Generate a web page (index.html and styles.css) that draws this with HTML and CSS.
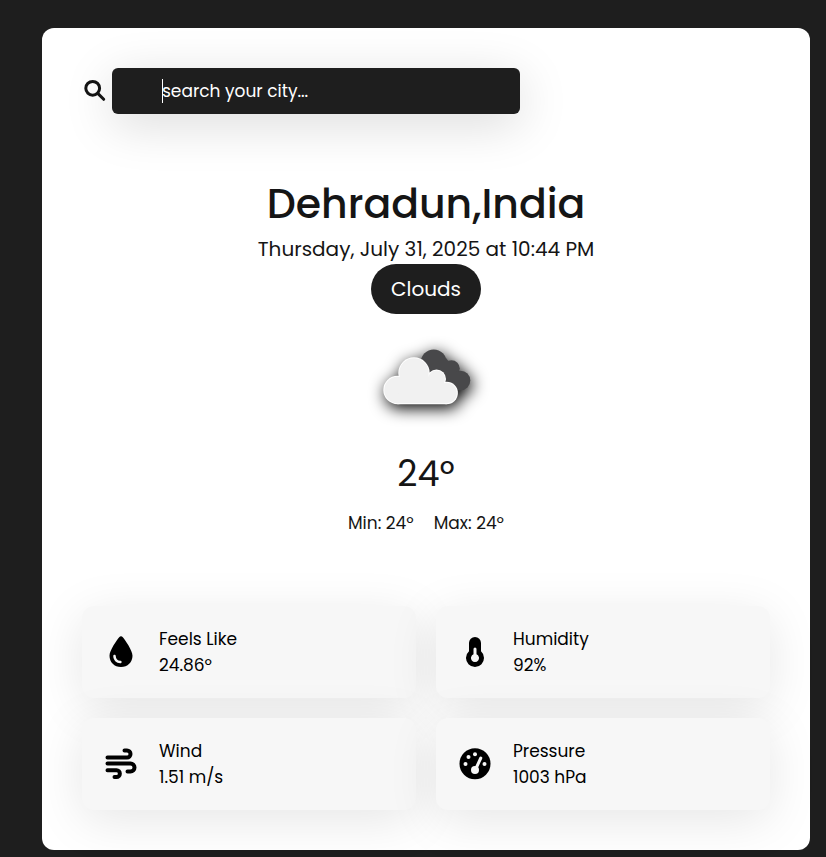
FILE: index.html
```html
<!DOCTYPE html>
<html lang="en">
<head>
<meta charset="utf-8">
<meta name="viewport" content="width=device-width, initial-scale=1">
<title>Weather</title>
<link rel="stylesheet" href="styles.css">
</head>
<body>
<main class="container">
  <form class="search" role="search">
    <label class="search-label" for="city" aria-label="City">
      <svg class="search-icon" viewBox="0 0 22 22" aria-hidden="true"><circle cx="8.700" cy="8.300" r="6.900"/><path d="M14 13.600l5.700 5.700"/></svg>
    </label>
    <div class="search-field">
      <input id="city" class="search-input" type="text" placeholder="search your city...">
      <span class="caret"></span>
    </div>
  </form>

  <section class="weather">
    <h1 class="city">Dehradun,India</h1>
    <p class="datetime">Thursday, July 31, 2025 at 10:44 PM</p>
    <p class="forecast">Clouds</p>
    <svg class="cloud" viewBox="0 0 100 100" role="img" aria-label="Clouds">
      <g fill="#48484a"><circle cx="57.700" cy="36.500" r="13"/><circle cx="75.500" cy="42.500" r="8.300"/><circle cx="84.500" cy="54.500" r="9.800"/><path d="M52 40L70 32L84 50L84 64.300L60 64Z"/></g>
      <g fill="#fff"><circle cx="21.500" cy="64" r="14.200"/><circle cx="38" cy="47" r="15.700"/><circle cx="60.500" cy="53" r="9.500"/><circle cx="70.700" cy="67" r="11.200"/><path d="M21.500 78.200L24 54L60 50L70.700 60V78.200Z"/></g>
      <g fill="#f1f1f1"><circle cx="21.500" cy="64" r="13.200"/><circle cx="38" cy="47" r="14.700"/><circle cx="60.500" cy="53" r="8.500"/><circle cx="70.700" cy="67" r="10.200"/><path d="M21.500 77.200L24 52L60 50L70.700 60V77.200Z"/></g>
    </svg>
    <p class="temperature">24º</p>
    <div class="minmax"><p>Min: 24º</p><p>Max: 24º</p></div>
  </section>

  <section class="info">
    <div class="card">
      <svg class="icon" viewBox="0 0 32 32" aria-hidden="true"><path transform="translate(4 0) scale(.0625)" d="M192 496C86 496 8 420 8 316C8 228.800 130.200 57.700 166.600 15.700C172.600 8.200 181.500 4 191.100 4h1.800c9.600 0 18.500 4.200 24.500 11.700C253.800 57.700 376 228.800 376 316c0 104-78 180-184 180zM108 320c0-12-10-20-20-20s-20 8-20 20c0 66 50 116 112 116c12 0 22-8 22-20s-10-20-22-20c-40 0-72-32-72-76z"/></svg>
      <div><p>Feels Like</p><p>24.86º</p></div>
    </div>
    <div class="card">
      <svg class="icon" viewBox="0 0 32 32" aria-hidden="true"><path fill-rule="evenodd" d="M10 7a6 6 0 0 1 12 0v8.300a9 9 0 1 1-12 0zM14.500 13v5.300a4 4 0 1 0 3 0V13a1.500 1.500 0 0 0-3 0z"/></svg>
      <div><p>Humidity</p><p>92%</p></div>
    </div>
    <div class="card">
      <svg class="icon line" viewBox="0 0 32 32" aria-hidden="true"><path d="M2.500 9.500H22a3.500 3.500 0 1 0 0-7h-2.500M2.500 15.500H25.500a4 4 0 1 1 0 8h-3M2.500 22.300H11.500a3.200 3.200 0 1 1 0 6.700H9.500"/></svg>
      <div><p>Wind</p><p>1.51 m/s</p></div>
    </div>
    <div class="card">
      <svg class="icon" viewBox="0 0 32 32" aria-hidden="true"><circle cx="16" cy="15.700" r="15.500"/><g fill="#f7f7f7"><circle cx="6.500" cy="16" r="2"/><circle cx="9.500" cy="9" r="2"/><circle cx="16" cy="6.300" r="2"/><circle cx="25.500" cy="16" r="2"/><circle cx="16" cy="22" r="4"/></g><path d="M17.200 20L21.800 10" fill="none" stroke="#f7f7f7" stroke-width="3" stroke-linecap="round"/></svg>
      <div><p>Pressure</p><p>1003 hPa</p></div>
    </div>
  </section>
</main>
</body>
</html>
```
FILE: styles.css
```css
* { box-sizing: border-box; margin: 0; }
body {
  background: #1e1e1e;
  color: #151515;
  font-family: Poppins, Inter, "Open Sans", sans-serif;
  font-size: 17px;
  line-height: 26px;
}
.container {
  margin: 28px 16px 7px 42px;
  padding: 40px;
  background: #fff;
  border-radius: 12px;
}
.search { display: flex; align-items: center; gap: 6px; }
.search-label { display: flex; padding-left: 2px; }
.search-icon {
  width: 22px;
  height: 22px;
  overflow: visible;
  fill: none;
  stroke: #151515;
  stroke-width: 3;
  stroke-linecap: round;
}
.search-field { position: relative; flex: 0 1 408px; min-width: 0; }
.search-input {
  display: block;
  width: 100%;
  height: 46px;
  padding: 0 20px 0 50px;
  border: 0;
  border-radius: 6px;
  outline: 0;
  background: #1e1e1e;
  color: #fff;
  font: inherit;
  box-shadow: 0 10px 50px rgba(0, 0, 0, .15);
}
.search-input::placeholder { color: #fff; opacity: 1; }
.caret {
  position: absolute;
  left: 50px;
  top: 11px;
  width: 1px;
  height: 24px;
  background: #fff;
}
.weather {
  display: flex;
  flex-direction: column;
  align-items: center;
  margin-top: 60px;
  text-align: center;
}
.city { margin-bottom: 2px; font-size: 41px; line-height: 60px; font-weight: 500; }
.datetime { font-size: 20px; line-height: 26px; margin-bottom: 2px; }
.forecast {
  padding: 10px 20px;
  border-radius: 25px;
  background: #1e1e1e;
  color: #fff;
  font-size: 20px;
  line-height: 30px;
}
.cloud {
  width: 100px;
  height: 100px;
  margin-top: 12px;
  filter: drop-shadow(2px 4px 8px #000);
}
.temperature { margin-top: 22px; font-size: 35px; line-height: 52px; }
.minmax { display: flex; gap: 20px; margin-top: 10px; }
.info {
  display: grid;
  grid-template-columns: repeat(2, minmax(0, 1fr));
  gap: 20px;
  margin-top: 70px;
}
.card {
  display: flex;
  align-items: center;
  gap: 22px;
  padding: 20px 23px;
  border-radius: 12px;
  background: #f7f7f7;
  color: #000;
  box-shadow: 0 10px 50px rgba(0, 0, 0, .1);
}
.icon { flex: none; width: 32px; height: 32px; }
.line {
  fill: none;
  stroke: #000;
  stroke-width: 4;
  stroke-linecap: round;
}
```
